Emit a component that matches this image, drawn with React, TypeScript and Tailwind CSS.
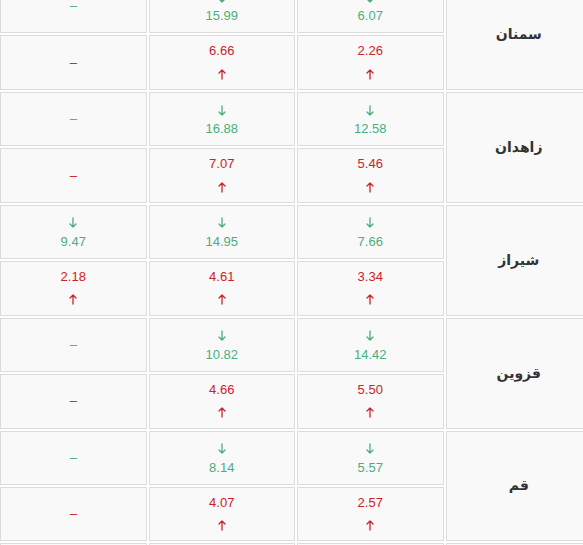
import React from "react";

const GREEN = "#4cae7c";
const RED = "#cc2229";

function ArrowDown() {
  return (
    <svg width="8" height="11" viewBox="0 0 8 11" fill="none" stroke={GREEN} strokeWidth="1.3" strokeLinecap="round" strokeLinejoin="round">
      <path d="M4 1 V10 M1 7 L4 10 L7 7" />
    </svg>
  );
}

function ArrowUp() {
  return (
    <svg width="8" height="11" viewBox="0 0 8 11" fill="none" stroke={RED} strokeWidth="1.3" strokeLinecap="round" strokeLinejoin="round">
      <path d="M4 10 V1 M1 4 L4 1 L7 4" />
    </svg>
  );
}

const cellBase =
  "border border-[#dcdcdc] bg-[#f9f9f9] flex flex-col items-center justify-center text-[13px] font-['Liberation_Sans',Arial,sans-serif]";

function GreenCell({ v }: { v: string | null }) {
  if (!v)
    return (
      <div className={cellBase} style={{ color: GREEN }}>
        <span className="leading-[20px]">–</span>
      </div>
    );
  return (
    <div className={cellBase} style={{ color: GREEN }}>
      <div className="h-[20px] flex items-center justify-center pt-[2px]">
        <ArrowDown />
      </div>
      <div className="h-[20px] leading-[20px]">{v}</div>
    </div>
  );
}

function RedCell({ v }: { v: string | null }) {
  if (!v)
    return (
      <div className={cellBase} style={{ color: RED }}>
        <span className="leading-[20px]">–</span>
      </div>
    );
  return (
    <div className={cellBase} style={{ color: RED }}>
      <div className="h-[20px] leading-[20px]">{v}</div>
      <div className="h-[20px] mt-[3px] flex items-center justify-center">
        <ArrowUp />
      </div>
    </div>
  );
}

type Group = {
  city: string;
  green: [string | null, string | null, string | null];
  red: [string | null, string | null, string | null];
};

const groups: Group[] = [
  { city: "سمنان", green: ["6.07", "15.99", null], red: ["2.26", "6.66", null] },
  { city: "زاهدان", green: ["12.58", "16.88", null], red: ["5.46", "7.07", null] },
  { city: "شیراز", green: ["7.66", "14.95", "9.47"], red: ["3.34", "4.61", "2.18"] },
  { city: "قزوین", green: ["14.42", "10.82", null], red: ["5.50", "4.66", null] },
  { city: "قم", green: ["5.57", "8.14", null], red: ["2.57", "4.07", null] },
];

export default function App() {
  return (
    <div className="w-[583px] h-[545px] overflow-hidden bg-white">
      <div
        dir="rtl"
        className="grid w-[594px] -ml-[2px] -mt-[21px] grid-cols-[146.5px_146.5px_146.5px_146.5px] auto-rows-[54.44px] gap-[2px]"
      >
        {groups.map((g) => (
          <React.Fragment key={g.city}>
            <div className="row-span-2 border border-[#dcdcdc] bg-[#f9f9f9] flex items-center justify-center text-[14px] font-bold text-[#333] font-['DejaVu_Sans',sans-serif]">
              {g.city}
            </div>
            <GreenCell v={g.green[0]} />
            <GreenCell v={g.green[1]} />
            <GreenCell v={g.green[2]} />
            <RedCell v={g.red[0]} />
            <RedCell v={g.red[1]} />
            <RedCell v={g.red[2]} />
          </React.Fragment>
        ))}
        <div className="row-span-2 border border-[#dcdcdc] bg-[#f9f9f9]" />
        <div className="border border-[#dcdcdc] bg-[#f9f9f9]" />
        <div className="border border-[#dcdcdc] bg-[#f9f9f9]" />
        <div className="border border-[#dcdcdc] bg-[#f9f9f9]" />
      </div>
    </div>
  );
}
